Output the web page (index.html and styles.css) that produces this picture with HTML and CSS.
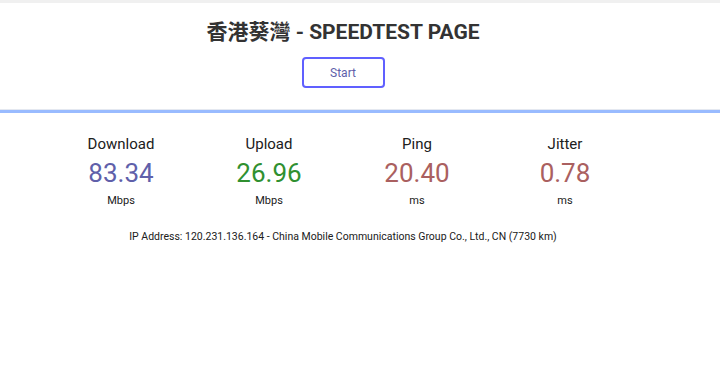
FILE: index.html
```html
<!DOCTYPE html>
<html lang="en">
<head>
    <meta charset="UTF-8">
    <meta name="viewport" content="width=device-width, initial-scale=1.0">
    <title>香港葵灣 - SPEEDTEST PAGE</title>
    <link rel="stylesheet" href="styles.css">
</head>
<body>
    <div class="topbar"></div>
    <div class="header">
        <h1>香港葵灣 - SPEEDTEST PAGE</h1>
        <button id="startButton" class="btn-start">Start</button>
    </div>
    <div class="divider"></div>

    <div class="test-area">
        <div class="test-row">
            <div class="test">
                <div class="test-name">Download</div>
                <div class="meter-text dl">83.34</div>
                <div class="unit">Mbps</div>
            </div>
            <div class="test">
                <div class="test-name">Upload</div>
                <div class="meter-text ul">26.96</div>
                <div class="unit">Mbps</div>
            </div>
            <div class="test">
                <div class="test-name">Ping</div>
                <div class="meter-text ping">20.40</div>
                <div class="unit">ms</div>
            </div>
            <div class="test">
                <div class="test-name">Jitter</div>
                <div class="meter-text jitter">0.78</div>
                <div class="unit">ms</div>
            </div>
        </div>
        <div class="ip-area">IP Address: <span id="ip">120.231.136.164 - China Mobile Communications Group Co., Ltd., CN (7730 km)</span></div>
    </div>
</body>
</html>
```

FILE: styles.css
```css
body {
    font-family: Roboto, "Noto Sans CJK TC", sans-serif;
    background-color: #fff;
    color: #202020;
    margin: 0;
    padding: 0;
}
.topbar {
    height: 3px;
    background-color: #f0f0f0;
}
.header {
    width: 686px;
    text-align: center;
}
h1 {
    font-size: 21px;
    font-weight: 700;
    color: #333;
    margin: 0;
    padding-top: 15px;
    line-height: 28px;
}
.btn-start {
    display: block;
    margin: 11px auto 0;
    width: 83px;
    height: 31px;
    background-color: #fff;
    border: 2px solid #6060ff;
    border-radius: 4px;
    color: #6060aa;
    font-family: Roboto, sans-serif;
    font-size: 12px;
    cursor: pointer;
}
.divider {
    margin-top: 21px;
    border-top: 1px solid #e4e8f0;
    height: 3px;
    background-color: #99bbff;
}
.test-area {
    width: 686px;
    text-align: center;
    padding-top: 21px;
}
.test-row {
    display: flex;
    justify-content: center;
}
.test {
    width: 148px;
}
.test-name {
    font-size: 15px;
    line-height: 20px;
    color: #202020;
}
.meter-text {
    font-size: 26px;
    line-height: 32px;
    margin-top: 3px;
}
.dl { color: #6060aa; }
.ul { color: #309030; }
.ping, .jitter { color: #aa6060; }
.unit {
    font-size: 11px;
    line-height: 14px;
    margin-top: 5px;
}
.ip-area {
    font-size: 10.5px;
    margin-top: 22px;
}
```
